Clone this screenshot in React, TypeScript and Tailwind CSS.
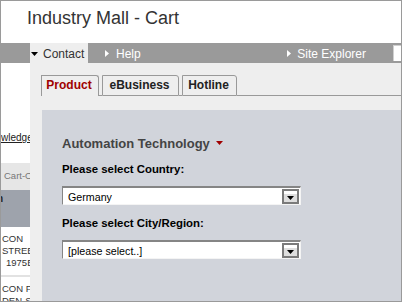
import React from "react";

function TriDown({ color = "#000", w = 7, h = 4 }: { color?: string; w?: number; h?: number }) {
  return (
    <svg width={w} height={h} viewBox={`0 0 ${w} ${h}`} className="block shrink-0">
      <path d={`M0 0H${w}L${w / 2} ${h}Z`} fill={color} />
    </svg>
  );
}

function TriRight() {
  return (
    <svg width={4} height={7} viewBox="0 0 4 7" className="block shrink-0">
      <path d="M0 0L4 3.5L0 7Z" fill="#fff" />
    </svg>
  );
}

function Select({ value }: { value: string }) {
  return (
    <div className="w-[239px] h-[19px] flex bg-white border-t-2 border-l border-t-[#858585] border-l-[#858585] border-b border-r border-b-[#f4f4f4] border-r-[#f4f4f4]">
      <div className="flex-1 pl-[5px] pt-[3px] text-[10.7px] leading-[12px] text-black whitespace-nowrap">{value}</div>
      <div className="w-[17px] h-[15px] mt-[0.5px] mr-[1px] border-2 border-[#7a7a7a] flex flex-col">
        <div className="h-[3px] bg-white" />
        <div className="flex-1 bg-[#dedede] flex items-center justify-center">
          <TriDown w={7} h={4} />
        </div>
      </div>
    </div>
  );
}

export default function App() {
  return (
    <div className="w-[402px] h-[302px] border border-[#9a9a9a] bg-white overflow-hidden flex flex-col font-['Liberation_Sans',Arial,sans-serif]">
      <header className="h-[42px] shrink-0 pl-[26px] pt-[6px] text-[18px] leading-[22px] text-[#333]">
        Industry Mall - Cart
      </header>

      <nav className="h-[20px] shrink-0 bg-[#9a9a9a] flex text-[12px] leading-[14px]">
        <div className="ml-[29px] w-[58px] bg-[#eeeeee] flex pl-[1px]">
          <div className="pt-[9px]">
            <TriDown />
          </div>
          <span className="ml-[5px] pt-[4px] text-[#333]">Contact</span>
        </div>
        <div className="ml-[17px] flex">
          <div className="pt-[7px]">
            <TriRight />
          </div>
          <span className="ml-[7px] pt-[4px] text-white">Help</span>
        </div>
        <div className="ml-auto mr-[27px] flex">
          <div className="pt-[7px]">
            <TriRight />
          </div>
          <span className="ml-[6px] pt-[4px] text-white">Site Explorer</span>
        </div>
        <div className="w-[8px] h-[16px] mt-[2px] bg-white border-l border-t border-[#d0d0d0]" />
      </nav>

      <div className="flex-1 flex min-h-0">
        <aside className="w-[29px] shrink-0 overflow-hidden bg-white flex flex-col whitespace-nowrap">
          <div className="mt-[69px] text-[10px] leading-[12px] underline text-[#222]">wledgebase</div>
          <div className="mt-[19px] h-[27px] shrink-0 bg-[#e6e6e6] pl-[3px] pt-[7px] text-[9.5px] leading-[12px] text-[#777]">Cart-Overview</div>
          <div className="h-[37px] shrink-0 bg-[#9ea3ac] pt-[3px] text-[10px] leading-[12px] text-[#222] font-bold">
            <span className="ml-[-4px]">n</span>
          </div>
          <div className="h-[50px] shrink-0 border-b-2 border-[#e2e2e2] pt-[6px] text-[9.5px] leading-[12px] text-[#333] pl-[1px]">
            <div>CON</div>
            <div>STREBEL</div>
            <div className="pl-[4px]">1975B</div>
          </div>
          <div className="pt-[6px] text-[9.5px] leading-[12px] text-[#333] pl-[1px]">
            <div>CON FIX</div>
            <div>DEN-SAL</div>
          </div>
        </aside>

        <main className="flex-1 bg-[#eeeeee] flex flex-col min-w-0">
          <div className="mt-[12px] pl-[11px] flex h-[21px] shrink-0 text-[12px] leading-[15px] font-bold">
            <div className="w-[58px] h-[21px] border-t border-l border-r border-[#999] rounded-tr-[3px] flex justify-center pt-[2px] pr-[2px] text-[#a00000]">
              Product
            </div>
            <div className="w-[3px] border-b border-[#999]" />
            <div className="w-[77px] h-[21px] border border-[#999] rounded-tr-[3px] flex justify-center pt-[2px] pr-[2px] text-[#222]">
              eBusiness
            </div>
            <div className="w-[3px] border-b border-[#999]" />
            <div className="w-[55px] h-[21px] border border-[#999] rounded-tr-[3px] flex justify-center pt-[2px] pr-[2px] text-[#222]">
              Hotline
            </div>
            <div className="flex-1 border-b border-[#999]" />
          </div>

          <section className="mt-[14px] ml-[12px] flex-1 bg-[#d1d4db] pl-[20px] pt-[26px] flex flex-col">
            <div className="flex items-center text-[13px] leading-[16px] font-bold text-[#444]">
              <span>Automation Technology</span>
              <span className="ml-[6px] mt-[-2px]">
                <TriDown color="#a00000" w={7} h={4} />
              </span>
            </div>
            <div className="mt-[10px] text-[11.4px] leading-[14px] font-bold text-black">Please select Country:</div>
            <div className="mt-[10px]">
              <Select value="Germany" />
            </div>
            <div className="mt-[11px] text-[11.4px] leading-[14px] font-bold text-black">Please select City/Region:</div>
            <div className="mt-[10px]">
              <Select value="[please select..]" />
            </div>
          </section>
        </main>
      </div>
    </div>
  );
}
